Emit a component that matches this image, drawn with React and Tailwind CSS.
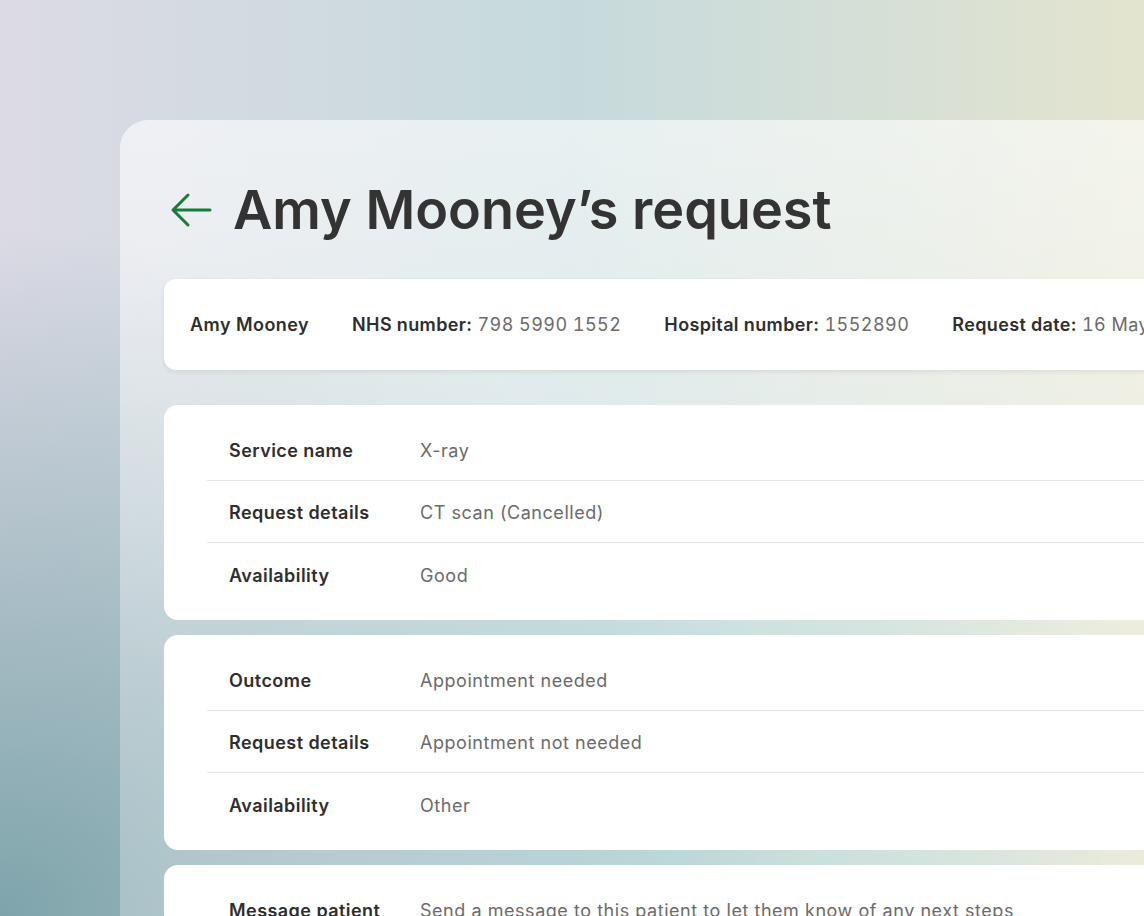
import React from 'react';

const patient = [
	{ label: 'NHS number:', value: '798 5990 1552' },
	{ label: 'Hospital number:', value: '1552890' },
	{ label: 'Request date:', value: '16 May 2024' },
];

const sections = [
	[
		{ label: 'Service name', value: 'X-ray' },
		{ label: 'Request details', value: 'CT scan (Cancelled)' },
		{ label: 'Availability', value: 'Good' },
	],
	[
		{ label: 'Outcome', value: 'Appointment needed' },
		{ label: 'Request details', value: 'Appointment not needed' },
		{ label: 'Availability', value: 'Other' },
	],
	[
		{ label: 'Message patient', value: 'Send a message to this patient to let them know of any next steps' },
		{ label: 'Attachments', value: 'None' },
	],
];

const DetailCard = ({ rows }) => (
	<div className="bg-white rounded-[14px] pl-[43px] pt-[14px] pb-[15px]">
		{rows.map((row, i) => (
			<div
				key={i}
				className={`flex items-center h-[62px] pl-[22px] pt-[2px] ${i < rows.length - 1 ? 'border-b border-[#e6e6e6]' : ''}`}
			>
				<span className="w-[191px] shrink-0 font-semibold tracking-[0.025em] text-[#2e2e2e]">{row.label}</span>
				<span className="text-[#6b6b6b] tracking-[0.03em] whitespace-nowrap">{row.value}</span>
			</div>
		))}
	</div>
);

const App = () => {
	return (
		<div
			className="w-[1144px] h-[916px] overflow-hidden bg-[radial-gradient(ellipse_70%_75%_at_0%_100%,#7ea4ab_0%,rgba(126,164,171,0)_100%),radial-gradient(ellipse_45%_40%_at_55%_85%,rgba(150,200,200,0.8)_0%,rgba(150,200,200,0)_100%),linear-gradient(90deg,#dcdae5_0%,#c6dadd_50%,#e3e4cf_100%)]"
			style={{ fontFamily: 'Inter, "Noto Sans", sans-serif' }}
		>
			<div className="ml-[120px] mt-[120px] w-[1200px] h-[900px] rounded-tl-[28px] bg-[linear-gradient(180deg,rgba(255,255,255,0.6)_0%,rgba(255,255,255,0.3)_60%,rgba(255,255,255,0.25)_100%)] pl-[44px] pt-[52px]">
				<div className="flex items-center h-[76px] pl-[6px]">
					<svg width="42" height="36" viewBox="0 0 42 36" fill="none" className="shrink-0">
						<path d="M40 18H3M18 3L3 18l15 15" stroke="#1a7a3c" strokeWidth="3" strokeLinecap="round" strokeLinejoin="round" />
					</svg>
					<h1 className="ml-[21px] text-[54px] leading-none font-semibold text-[#333333]">
						Amy Mooney’s request
					</h1>
				</div>

				<div className="mt-[31px] flex flex-col text-[18px]">
					<div className="bg-white rounded-[12px] h-[91px] flex items-center pl-[26px] gap-[43px] shadow-[0_2px_5px_rgba(0,0,0,0.08)] whitespace-nowrap">
						<span className="font-semibold tracking-[0.025em] text-[#2e2e2e]">Amy Mooney</span>
						{patient.map((p) => (
							<span key={p.label}>
								<span className="font-semibold tracking-[0.02em] text-[#2e2e2e]">{p.label}</span>{' '}
								<span className="text-[#6b6b6b] tracking-[0.025em] tabular-nums">{p.value}</span>
							</span>
						))}
					</div>

					<div className="mt-[35px] flex flex-col gap-[15px]">
						{sections.map((rows, i) => (
							<DetailCard key={i} rows={rows} />
						))}
					</div>
				</div>
			</div>
		</div>
	);
};

export default App;
